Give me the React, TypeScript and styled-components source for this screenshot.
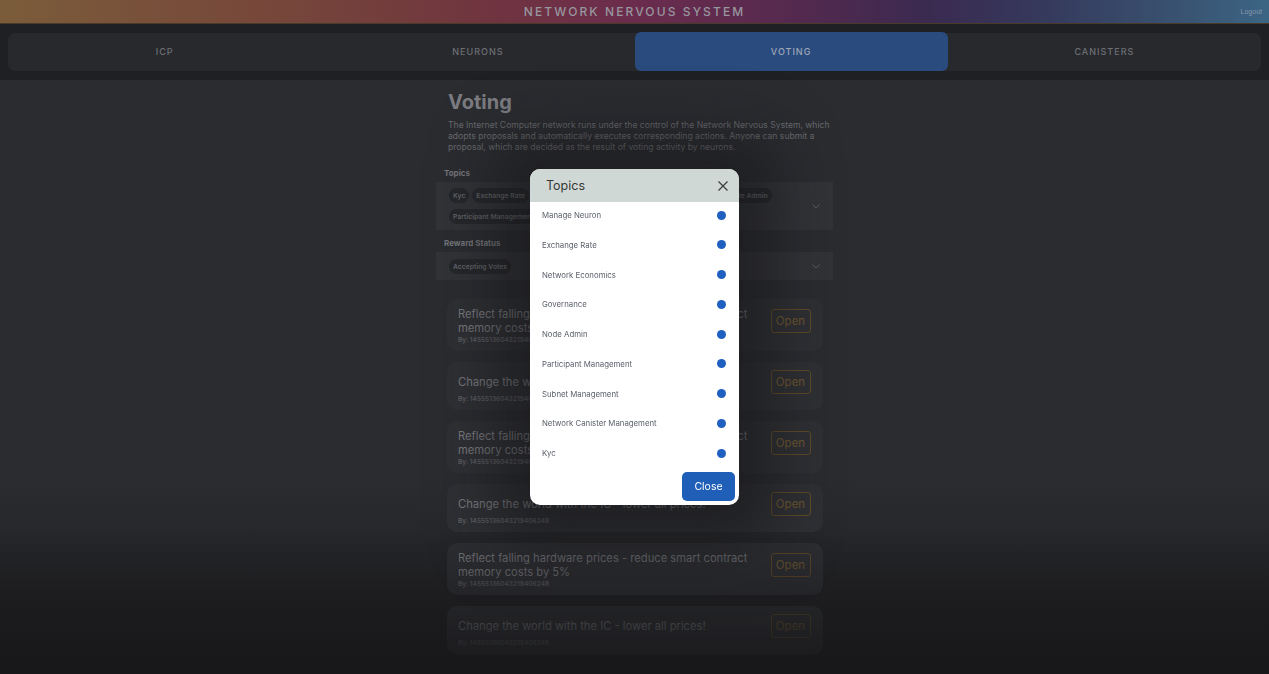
import React from "react";
import styled, { createGlobalStyle } from "styled-components";

const Global = createGlobalStyle`
  html, body { margin: 0; padding: 0; }
  body {
    background: #19191b;
    font-family: Inter, "Noto Sans", "Liberation Sans", sans-serif;
    -webkit-font-smoothing: antialiased;
  }
  * { box-sizing: border-box; }
`;

const Page = styled.div`
  height: 674px;
  overflow: hidden;
  display: flex;
  flex-direction: column;
  background: linear-gradient(180deg, #2b2c30 0px, #2b2c30 480px, #1b1b1d 674px);
`;

const Header = styled.header`
  position: relative;
  height: 24px;
  flex: none;
  display: flex;
  align-items: center;
  justify-content: center;
  background: linear-gradient(
    90deg,
    #7b5c3a 0%,
    #76463a 22%,
    #70353f 38%,
    #6b2c4d 50%,
    #54294f 63%,
    #3b2a50 73%,
    #35395c 82%,
    #39506f 92%,
    #3c6584 100%
  );
  border-bottom: 1px solid #4a3a2a;
`;

const Brand = styled.h1`
  margin: 0;
  font-size: 12px;
  font-weight: 500;
  letter-spacing: 2.1px;
  color: #97979e;
`;

const Logout = styled.a`
  position: absolute;
  right: 7px;
  top: 8px;
  font-size: 7px;
  color: #8797ab;
  font-family: "Liberation Sans", Arial, sans-serif;
`;

const NavBar = styled.nav`
  flex: none;
  height: 56px;
  background: #1f2023;
  padding: 9px 8px 9px 8px;
`;

const Tabs = styled.div`
  display: grid;
  grid-template-columns: repeat(4, 1fr);
  height: 38px;
  background: #28292d;
  border-radius: 7px;
`;

const Tab = styled.div<{ $active?: boolean }>`
  display: flex;
  align-items: center;
  justify-content: center;
  font-size: 9px;
  letter-spacing: 1px;
  font-weight: 500;
  border-radius: 6px;
  margin-top: ${(p) => (p.$active ? "-1px" : "0")};
  height: ${(p) => (p.$active ? "39px" : "38px")};
  padding-bottom: 1px;
  background: ${(p) => (p.$active ? "#294b7e" : "transparent")};
  color: ${(p) => (p.$active ? "#a0a8b8" : "#6d6f75")};
`;

const Main = styled.main`
  width: 397px;
  margin: 0 auto;
  padding-top: 10px;
`;

const Title = styled.h2`
  margin: 0 0 0 12px;
  font-size: 20px;
  line-height: 24px;
  font-weight: 700;
  color: #7b7c81;
`;

const Intro = styled.p`
  margin: 6px 2px 0 12px;
  font-size: 8.6px;
  line-height: 11px;
  color: #67696e;
`;

const Label = styled.div<{ $top: number }>`
  margin: ${(p) => p.$top}px 0 0 8px;
  font-size: 8px;
  line-height: 10px;
  font-weight: 700;
  color: #75767b;
`;

const SelectBox = styled.div<{ $h: number }>`
  margin-top: 4px;
  height: ${(p) => p.$h}px;
  background: #323337;
  display: flex;
  align-items: center;
  padding: 0 12px 0 13px;
`;

const ChipArea = styled.div`
  flex: 1;
  display: flex;
  flex-direction: column;
  gap: 6px;
`;

const ChipRow = styled.div`
  display: flex;
  gap: 3px;
`;

const Chip = styled.span`
  height: 15px;
  padding: 0 4px;
  border-radius: 8px;
  background: #26272b;
  color: #626368;
  font-size: 6.8px;
  font-weight: 600;
  display: inline-flex;
  align-items: center;
  white-space: nowrap;
`;

const Chevron = styled.svg`
  width: 10px;
  height: 10px;
  flex: none;
`;

const Cards = styled.div`
  margin-top: 19px;
  padding: 0 10px 0 11px;
  display: flex;
  flex-direction: column;
  gap: 11px;
`;

const Card = styled.div`
  background: #2f3034;
  border-radius: 10px;
  padding: 7.5px 12.5px 7.3px 11px;
`;

const CardTop = styled.div`
  display: flex;
  align-items: center;
  gap: 14px;
  min-height: 25px;
`;

const CardTitle = styled.div`
  flex: 1;
  font-size: 11.2px;
  line-height: 14.3px;
  color: #797a7f;
`;

const OpenButton = styled.button`
  flex: none;
  width: 40px;
  height: 24px;
  border: 1px solid #5f4b28;
  border-radius: 3px;
  background: transparent;
  color: #6e5732;
  font-family: inherit;
  font-size: 11.5px;
  padding: 0;
`;

const By = styled.div`
  margin-top: 0.5px;
  font-size: 6.5px;
  line-height: 8px;
  font-weight: 600;
  color: #5d5e63;
`;

const Backdrop = styled.div`
  position: fixed;
  inset: 0;
  display: flex;
  align-items: center;
  justify-content: center;
  background: linear-gradient(
    180deg,
    rgba(24, 24, 26, 0) 0%,
    rgba(24, 24, 26, 0) 79%,
    rgba(24, 24, 26, 0.5) 90%,
    rgba(24, 24, 26, 0.96) 100%
  );
`;

const Modal = styled.div`
  width: 209px;
  height: 336px;
  background: #ffffff;
  border-radius: 10px;
  overflow: hidden;
  display: flex;
  flex-direction: column;
  box-shadow: 0 6px 60px 38px rgba(20, 20, 22, 0.55);
`;

const ModalHeader = styled.div`
  height: 33px;
  flex: none;
  background: #d0d8d5;
  display: flex;
  align-items: center;
  justify-content: space-between;
  padding: 0 10px 0 16px;
`;

const ModalTitle = styled.div`
  font-size: 12.5px;
  color: #363838;
`;

const CloseX = styled.svg`
  width: 12px;
  height: 12px;
`;

const ItemList = styled.div`
  display: flex;
  flex-direction: column;
  gap: 3.75px;
  padding: 0 13px 0 12px;
`;

const Item = styled.div`
  height: 26px;
  display: flex;
  align-items: center;
  justify-content: space-between;
  font-size: 7.8px;
  color: #5c616b;
`;

const Dot = styled.span`
  width: 9px;
  height: 9px;
  border-radius: 50%;
  background: #1f5fc0;
`;

const ModalFooter = styled.div`
  display: flex;
  justify-content: flex-end;
  padding: 6px 4px 0 0;
`;

const CloseButton = styled.button`
  width: 53px;
  height: 29px;
  border: none;
  border-radius: 5px;
  background: #1f5fb8;
  color: #ffffff;
  font-family: inherit;
  font-size: 10.5px;
  padding: 0;
`;

const topics = [
  "Manage Neuron",
  "Exchange Rate",
  "Network Economics",
  "Governance",
  "Node Admin",
  "Participant Management",
  "Subnet Management",
  "Network Canister Management",
  "Kyc",
];

const proposals = [
  "Reflect falling hardware prices - reduce smart contract memory costs by 5%",
  "Change the world with the IC - lower all prices!",
  "Reflect falling hardware prices - reduce smart contract memory costs by 5%",
  "Change the world with the IC - lower all prices!",
  "Reflect falling hardware prices - reduce smart contract memory costs by 5%",
  "Change the world with the IC - lower all prices!",
];

const ChevronIcon = () => (
  <Chevron viewBox="0 0 10 10" fill="none">
    <path d="M1.5 3.5 L5 7 L8.5 3.5" stroke="#5a5b60" strokeWidth="1" />
  </Chevron>
);

export default function App() {
  return (
    <>
      <Global />
      <Page>
        <Header>
          <Brand>NETWORK NERVOUS SYSTEM</Brand>
          <Logout>Logout</Logout>
        </Header>
        <NavBar>
          <Tabs>
            <Tab>ICP</Tab>
            <Tab>NEURONS</Tab>
            <Tab $active>VOTING</Tab>
            <Tab>CANISTERS</Tab>
          </Tabs>
        </NavBar>
        <Main>
          <Title>Voting</Title>
          <Intro>
            The Internet Computer network runs under the control of the Network Nervous System, which
            adopts proposals and automatically executes corresponding actions. Anyone can submit a
            proposal, which are decided as the result of voting activity by neurons.
          </Intro>
          <Label $top={15}>Topics</Label>
          <SelectBox $h={48}>
            <ChipArea>
              <ChipRow>
                <Chip>Kyc</Chip>
                <Chip>Exchange Rate</Chip>
                <Chip>Network Economics</Chip>
                <Chip>Governance</Chip>
                <Chip>Manage Neuron</Chip>
                <Chip>Node Admin</Chip>
              </ChipRow>
              <ChipRow>
                <Chip>Participant Management</Chip>
                <Chip>Subnet Management</Chip>
              </ChipRow>
            </ChipArea>
            <ChevronIcon />
          </SelectBox>
          <Label $top={8}>Reward Status</Label>
          <SelectBox $h={28}>
            <ChipArea>
              <ChipRow>
                <Chip>Accepting Votes</Chip>
              </ChipRow>
            </ChipArea>
            <ChevronIcon />
          </SelectBox>
          <Cards>
            {proposals.map((t, i) => (
              <Card key={i}>
                <CardTop>
                  <CardTitle>{t}</CardTitle>
                  <OpenButton>Open</OpenButton>
                </CardTop>
                <By>By: 14555136043219406248</By>
              </Card>
            ))}
          </Cards>
        </Main>
        <Backdrop>
          <Modal>
            <ModalHeader>
              <ModalTitle>Topics</ModalTitle>
              <CloseX viewBox="0 0 12 12" fill="none">
                <path d="M1.5 1.5 L10.5 10.5 M10.5 1.5 L1.5 10.5" stroke="#3a3c3d" strokeWidth="1.2" />
              </CloseX>
            </ModalHeader>
            <ItemList>
              {topics.map((t) => (
                <Item key={t}>
                  {t}
                  <Dot />
                </Item>
              ))}
            </ItemList>
            <ModalFooter>
              <CloseButton>Close</CloseButton>
            </ModalFooter>
          </Modal>
        </Backdrop>
      </Page>
    </>
  );
}
